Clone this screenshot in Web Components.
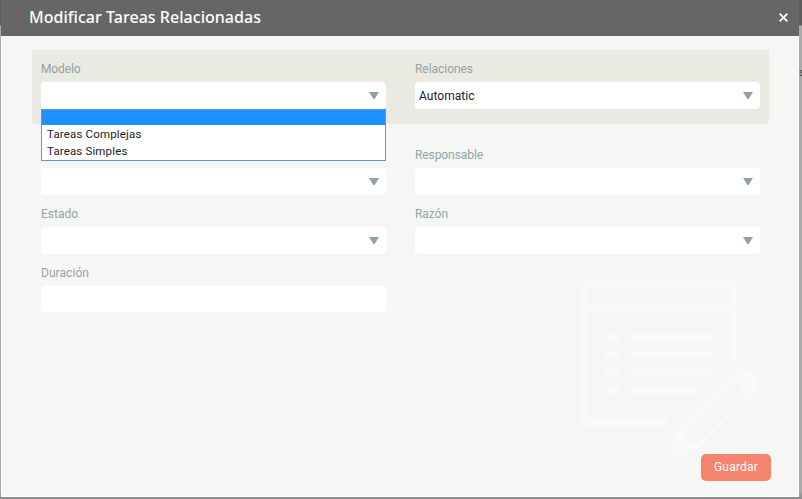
<!DOCTYPE html>
<html lang="es"><head><meta charset="utf-8"><title>Modificar Tareas Relacionadas</title>
<style>body{margin:0;width:802px;height:499px;overflow:hidden}</style></head><body>
<task-page></task-page>
<script>
const define=(name,html,init)=>customElements.define(name,class extends HTMLElement{
  constructor(){super();this.attachShadow({mode:'open'}).innerHTML=html}
  connectedCallback(){if(init)init(this,this.shadowRoot)}
});

// Text run tracked out to the advance given in its "w" attribute.
define('tracked-text','<style>:host{display:inline-block;white-space:nowrap}span{display:inline-block}</style><span></span>',(h,r)=>{
  const s=r.querySelector('span');s.textContent=h.getAttribute('text');
  const w=s.getBoundingClientRect().width;
  if(w)s.style.letterSpacing=((+h.getAttribute('w')-w)/s.textContent.length)+'px';
});

define('form-field',`<style>
:host{display:block;width:345px}
.label{height:18px;line-height:18px;font-size:12px;color:#91a5a3;margin-bottom:4px}
.box{display:flex;align-items:center;justify-content:space-between;box-sizing:border-box;height:var(--box-h,27px);background:#fff;border-radius:4px;padding:0 7px 0 4px;font-size:12px;color:#1e2229}
</style><div class="label"></div><div class="box"><div class="value"></div></div>`,(h,r)=>{
  const a=n=>h.getAttribute(n);
  if(a('label'))r.querySelector('.label').innerHTML=`<tracked-text text="${a('label')}" w="${a('w')}"></tracked-text>`;
  if(a('value'))r.querySelector('.value').innerHTML=`<tracked-text text="${a('value')}" w="${a('vw')}"></tracked-text>`;
  if(!h.hasAttribute('plain'))r.querySelector('.box').insertAdjacentHTML('beforeend','<svg width="10" height="7" viewBox="0 0 10 7"><path d="M0 0H10L5.6 7H4.4Z" fill="#8da4a1"/></svg>');
});

define('option-list',`<style>
:host{display:block;box-sizing:border-box;width:345px;height:52px;border:1px solid #6b8fd6;background:#fff;font-size:11.5px;color:#1e2229}
.sel{height:15px;background:#1e90ff;margin-bottom:1px}
.o{height:17px;line-height:17px;padding-left:5px}
</style><div class="sel"></div><div class="o"><tracked-text text="Tareas Complejas" w="94.500"></tracked-text></div><div class="o"><tracked-text text="Tareas Simples" w="80.500"></tracked-text></div>`);

define('modal-header',`<style>
:host{display:flex;box-sizing:border-box;height:36px;align-items:center;justify-content:space-between;background:#666;color:#fff;padding:0 11px 0 28px;font:500 16px/20px "Noto Sans",sans-serif}
tracked-text{position:relative;top:-1px}
svg{display:block;position:relative;top:-1px}
</style><tracked-text text="Modificar Tareas Relacionadas" w="232"></tracked-text><svg width="9" height="9" viewBox="0 0 9 9"><path d="M.7 .7L8.300 8.300M8.300 .7L.7 8.300" stroke="#fff" stroke-width="1.900"/></svg>`);

define('save-button',`<style>
:host{display:block}
button{display:block;width:70px;height:27px;border:0;border-radius:5px;background:#f5846e;color:#fff;padding:0 0 1px;font:12px/26px Roboto,sans-serif}
</style><button><tracked-text text="Guardar" w="44"></tracked-text></button>`);

define('notes-watermark',`<style>:host{display:block}svg{display:block}</style>
<svg width="180" height="180" viewBox="0 0 180 180" fill="none" stroke="#f8faf9" stroke-width="7">
<path d="M154.500 78V10Q154.500 5.500 150 5.500H10Q5.500 5.500 5.500 10V143.500H87M5.500 29.500H154" stroke-linecap="round" stroke-linejoin="round"/>
<path d="M26.500 58H41M51.500 58H133.500M26.500 75.500H41M51.500 75.500H133.500M26.500 93.500H41M51.500 93.500H133.500M26.500 111.500H41M51.500 111.500H119"/>
<path fill="#f8faf9" fill-rule="evenodd" stroke="none" d="M91 176L97 155Q99 150 103 146L154 95Q163 86 173 94Q183 104 175 115L120 169Q116 173 111 174L94 179Q90 180 91 176ZM104 156L114 166L121 163L167 118L157 103L106 151Z"/>
</svg>`);

define('task-page',`<style>
:host{display:flex;box-sizing:border-box;width:802px;height:499px;padding:0 3px 2px 1px;background:linear-gradient(#5b5d5e 0 25px,#aaa 26px 490px,#8b8b8b 499px);font-family:Roboto,sans-serif;position:relative}
.modal{position:relative;width:798px;height:497px;display:flex;flex-direction:column;background:#f6f6f4}
.body{flex:1;box-sizing:border-box;border:1px solid #fff;border-top:0;padding:14px 29px 0 30px}
.row{display:flex;gap:29px;padding-left:9px;margin-bottom:10px}
.panel{box-sizing:border-box;height:74px;padding-top:10px;background:#eaeae2;border-radius:0 0 4px 4px;margin-bottom:22px}
option-list{position:absolute;left:40px;top:109px;z-index:2}
notes-watermark{position:absolute;left:578px;top:279px}
save-button{position:absolute;left:700px;top:454px}
.edge{position:absolute;left:799px;top:65px;width:3px;height:16px;overflow:hidden;font:11px/16px Roboto,sans-serif;color:#444}
</style>
<div class="modal"><modal-header></modal-header><div class="body">
<div class="row panel"><form-field label="Modelo" w="39.500"></form-field><form-field label="Relaciones" w="58" value="Automatic" vw="55.500"></form-field></div>
<div class="row"><form-field></form-field><form-field label="Responsable" w="68"></form-field></div>
<div class="row"><form-field label="Estado" w="37"></form-field><form-field label="Razón" w="33"></form-field></div>
<div class="row"><form-field label="Duración" w="48" plain style="--box-h:26px"></form-field></div>
</div>
<notes-watermark></notes-watermark><option-list></option-list><save-button></save-button></div>
<div class="edge">s</div>`);
</script></body></html>
